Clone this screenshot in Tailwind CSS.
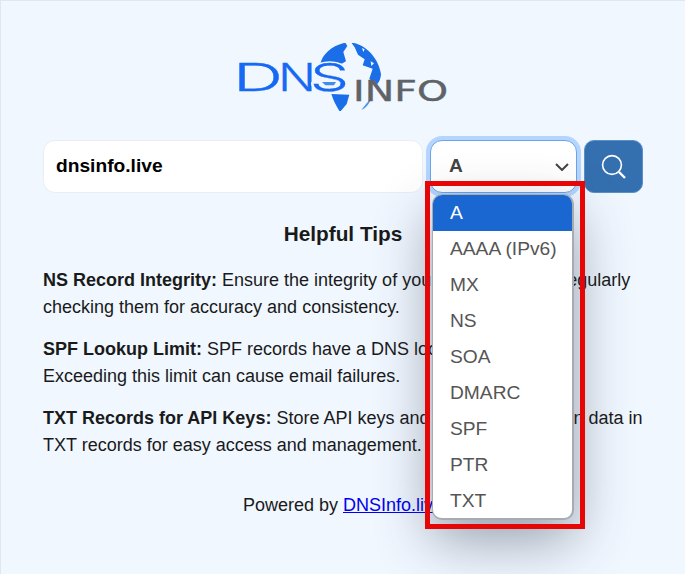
<!DOCTYPE html>
<html lang="en">
<head>
    <meta charset="UTF-8">
    <meta name="viewport" content="width=device-width, initial-scale=1.0">
    <title>DNSInfo</title>
    <script src="https://cdn.jsdelivr.net/npm/@tailwindcss/browser@4"></script>
</head>
<body class="bg-[#f0f7ff] font-['Liberation_Sans',Arial,sans-serif] text-[#1a1a1a] overflow-hidden">
    <div class="relative w-[685px] h-[574px] border-t border-l border-[#e2e6f0] overflow-hidden">
        <div class="pt-[42px] flex justify-center">
            <!-- logo -->
            <svg class="ml-[1px]" width="220" height="68" viewBox="232 43 220 68">
                <g transform="translate(310 38) scale(0.3333)" fill="#1a6fe8">
                    <path d="M25 78 C30 50 60 22 100 14 L106 24 L94 42 L102 70 L84 80 L60 76 L40 84Z"/>
                    <path d="M118 14 C160 18 200 60 207 108 C206 125 200 135 192 142 L172 122 L182 92 L152 82 L158 64 L138 50 L128 28Z"/>
                    <path d="M58 168 L112 170 L104 198 L84 222 C74 206 64 188 58 168Z"/>
                    <path d="M148 216 L170 188 L178 180 C172 198 162 210 148 216Z" opacity="0.75"/>
                    <path d="M30 132 L72 132 L66 142 L40 142Z" opacity="0.8"/>
                    <path d="M150 30 L158 34 L154 42Z M176 70 L186 76 L178 84Z M120 34 L124 60 L116 56Z" fill="#f0f7ff"/>
                </g>
                <g font-family="Inter" font-weight="300" font-size="38.5" fill="#1669f2" stroke="#1669f2" stroke-width="0.3">
                    <text x="231" y="91" textLength="50" lengthAdjust="spacingAndGlyphs">D</text>
                    <text x="276" y="91" textLength="38" lengthAdjust="spacingAndGlyphs">N</text>
                    <text x="308" y="91" textLength="39" lengthAdjust="spacingAndGlyphs" stroke="#f0f7ff" stroke-width="3.5">S</text>
                    <text x="308" y="91" textLength="39" lengthAdjust="spacingAndGlyphs">S</text>
                </g>
                <text x="351" y="101" textLength="95" lengthAdjust="spacingAndGlyphs" font-family="'DejaVu Sans'" font-size="29" fill="#5f6368" stroke="#5f6368" stroke-width="0.4">INFO</text>
            </svg>
        </div>

        <!-- search row -->
        <div class="mt-[29px] mx-[42px] w-[600px] flex h-[53px]">
            <div class="w-[380px] h-full bg-white rounded-xl border border-[#e8eef6] flex items-center pl-[12px] text-[19.2px] font-bold text-black">dnsinfo.live</div>
            <div class="ml-[7px] w-[147px] h-full bg-white rounded-xl border border-[#6aa5e8] ring-4 ring-[#b3d5ff] flex items-center justify-between pl-[18px] pr-[7px] text-[19.2px] font-bold text-[#444]">
                <span>A</span>
                <svg width="14" height="8" viewBox="0 0 14 8" fill="none" stroke="#444" stroke-width="2"><path d="M1 1l6 6 6-6"/></svg>
            </div>
            <div class="ml-[7px] w-[59px] h-full bg-[#3470b0] rounded-[10px] border border-[#5a8fc8] flex items-center justify-center">
                <svg width="26" height="26" viewBox="0 0 26 26" fill="none" stroke="#fff" stroke-width="1.6"><circle cx="11" cy="11" r="9.4"/><path d="M18 18l6 6" stroke-width="2.4"/></svg>
            </div>
        </div>

        <!-- tips -->
        <div class="mx-[42px] w-[600px] text-[18px] leading-[27px]">
            <h2 class="mt-[25px] mb-[17px] text-center text-[20.8px] leading-[32px] font-bold">Helpful Tips</h2>
            <p class="mb-[15px]"><b>NS Record Integrity:</b> Ensure the integrity of your NS records by regularly checking them for accuracy and consistency.</p>
            <p class="mb-[15px]"><b>SPF Lookup Limit:</b> SPF records have a DNS lookup limit of 10.<br>Exceeding this limit can cause email failures.</p>
            <p><b>TXT Records for API Keys:</b> Store API keys and other configuration data in TXT records for easy access and management.</p>
            <p class="mt-[33px] text-center">Powered by <a href="#" class="text-[#0000ee] underline">DNSInfo.live</a></p>
        </div>

        <!-- open select list -->
        <ul class="absolute left-[431px] top-[193px] w-[142px] h-[326px] bg-white rounded-[10px] border border-[#a8abb0] border-b-2 border-r-2 shadow-[0_20px_55px_rgba(40,50,70,0.45)] overflow-hidden text-[19.2px] text-[#555]">
            <li class="h-[36px] pl-[17px] flex items-center bg-[#1a67d2] text-white">A</li>
            <li class="h-[36px] pl-[17px] flex items-center">AAAA (IPv6)</li>
            <li class="h-[36px] pl-[17px] flex items-center">MX</li>
            <li class="h-[36px] pl-[17px] flex items-center">NS</li>
            <li class="h-[36px] pl-[17px] flex items-center">SOA</li>
            <li class="h-[36px] pl-[17px] flex items-center">DMARC</li>
            <li class="h-[36px] pl-[17px] flex items-center">SPF</li>
            <li class="h-[36px] pl-[17px] flex items-center">PTR</li>
            <li class="h-[36px] pl-[17px] flex items-center">TXT</li>
        </ul>

        <!-- red highlight -->
        <div class="absolute left-[424px] top-[180px] w-[160px] h-[348px] border-[5px] border-[#e60606]"></div>
    </div>
</body>
</html>
